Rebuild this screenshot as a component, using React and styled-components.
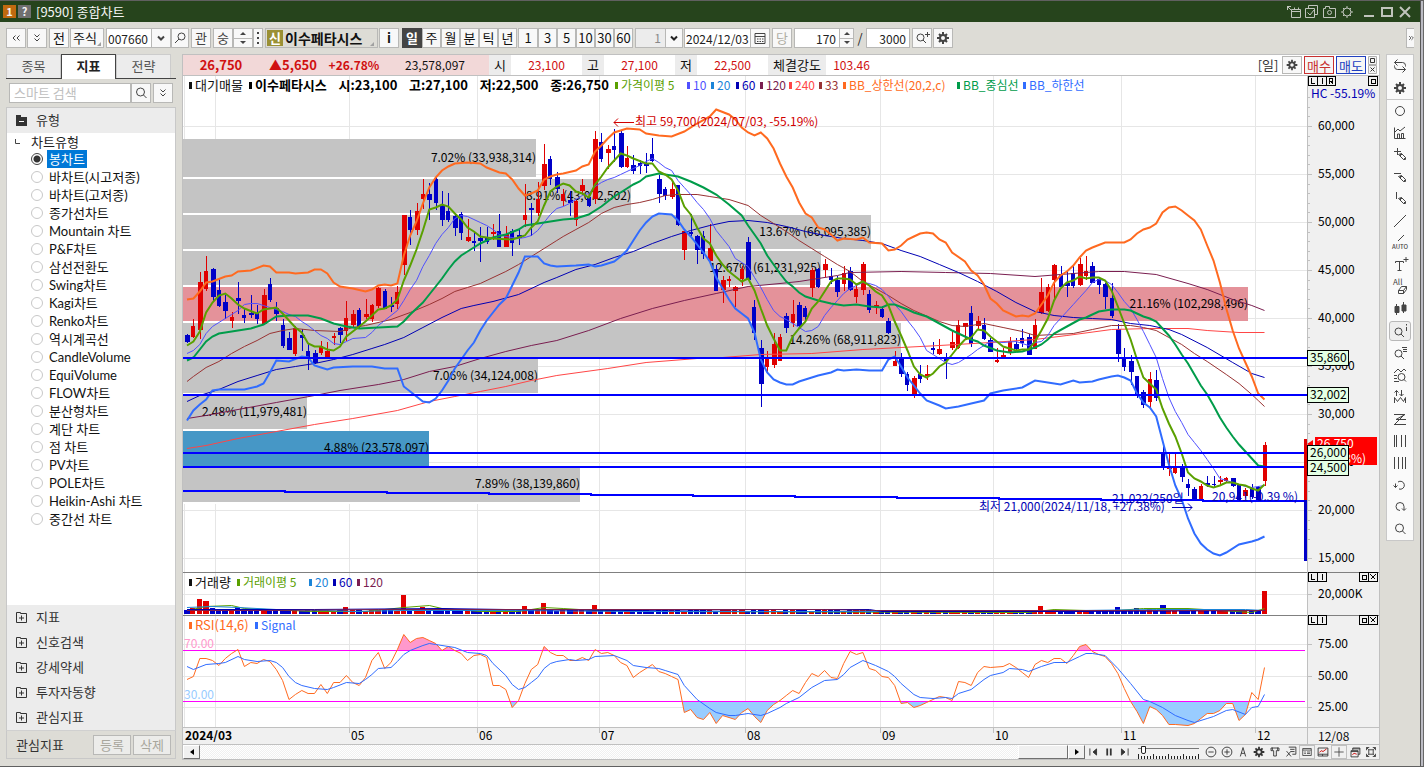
import React, { useLayoutEffect, useRef, useState } from "react";
import styled, { createGlobalStyle, css } from "styled-components";

const FONT = '"Noto Sans CJK KR", "Noto Sans", sans-serif';

const Global = createGlobalStyle`
  * { box-sizing: border-box; }
  body { margin: 0; background: #dddcd6; font-family: ${FONT}; font-size: 13px; line-height: 16px; color: #222; }
  button, input, select { font: inherit; color: inherit; margin: 0; padding: 0; border-radius: 0; }
  svg { display: block; }
`;

/* ---------- chart data ---------- */

// high, body top, body bottom, low, direction
const CANDLES = `334 335 342 343 b|319 326 337 338 r|272 282 330 339 r|256 271 289 291 r|268 269 297 302 b|279 290 306 307 b|295 302 311 319 b|312 317 321 328 r|282 298 301 314 b|309 315 318 323 b|295 313 315 318 b|305 313 319 324 b|289 295 324 325 r|278 284 300 302 b|302 308 314 321 b|319 325 346 348 b|332 338 350 350 b|326 328 354 356 r|329 335 338 351 b|344 351 358 370 b|350 353 363 364 b|341 346 353 355 r|342 351 357 358 r|333 336 338 345 r|327 328 335 343 b|301 318 331 341 r|310 314 325 327 r|308 310 327 328 b|299 314 317 319 r|304 305 319 322 r|287 288 306 308 r|289 291 309 309 b|297 305 307 312 b|286 292 304 309 r|215 215 265 275 r|210 217 230 245 b|203 211 230 235 r|179 194 199 209 r|183 194 200 220 b|177 179 203 210 b|191 206 220 226 b|193 211 220 222 b|215 216 228 236 b|212 214 233 240 b|219 237 241 242 r|233 241 243 251 b|227 238 241 262 b|227 238 242 244 b|224 232 234 240 r|214 231 247 247 b|226 234 247 247 r|229 231 243 256 b|230 235 238 245 b|184 215 220 227 r|203 208 210 236 b|182 199 213 216 r|144 164 186 190 r|156 159 179 185 b|172 177 189 193 b|189 194 201 206 r|191 200 203 216 b|200 201 220 226 r|179 185 191 195 r|194 197 206 207 b|131 139 199 204 r|133 142 159 162 b|145 149 153 169 r|129 146 150 162 b|130 133 167 168 b|146 158 167 168 r|155 165 171 174 b|160 163 166 174 b|153 164 166 173 b|138 154 161 162 b|175 179 194 203 b|187 189 196 200 b|180 189 197 199 r|185 185 225 226 b|230 231 250 260 r|214 232 234 236 b|235 236 250 264 b|231 236 254 259 b|224 248 261 262 r|265 269 291 291 b|276 280 290 303 r|276 279 281 287 r|286 287 291 307 r|266 269 279 286 r|237 242 280 280 b|300 307 333 340 b|340 348 384 407 b|351 358 367 374 r|333 344 365 368 r|334 337 361 361 r|313 316 328 333 b|300 314 323 327 r|302 305 326 328 b|306 308 317 320 b|268 270 288 297 r|268 269 287 288 b|259 264 270 277 r|268 276 280 284 b|276 280 292 297 b|266 273 284 291 r|267 271 290 291 b|285 289 297 303 r|262 264 290 295 r|290 294 310 313 b|301 305 307 314 r|306 309 317 318 b|318 321 333 334 b|351 361 366 366 r|353 358 374 377 b|372 374 385 391 b|376 378 394 398 r|365 374 379 383 b|365 374 376 380 r|342 348 350 354 b|339 349 354 355 r|353 359 361 379 b|330 342 348 350 r|320 325 348 349 r|323 323 327 340 r|306 313 344 347 b|316 321 326 329 r|318 325 339 340 b|338 340 352 352 b|348 360 362 363 r|348 355 358 358 r|337 341 353 355 r|338 344 349 351 b|329 338 343 347 b|334 337 355 355 b|319 325 349 349 r|278 292 313 314 r|284 287 311 312 r|264 265 280 299 r|266 275 287 288 b|271 283 286 297 b|266 273 286 288 b|258 264 285 286 r|256 271 276 280 r|262 266 283 283 b|277 279 285 294 b|283 284 297 309 b|283 298 316 318 b|324 329 354 362 b|348 357 367 371 b|355 361 372 385 b|376 376 396 398 b|390 392 405 408 b|372 379 402 408 r|370 380 398 401 b|446 453 467 470 b|453 467 469 476 r|454 468 473 474 r|464 468 477 482 b|479 484 488 496 b|487 489 500 501 b|484 486 499 500 r|476 483 485 487 b|476 484 485 488 b|476 480 482 486 r|477 478 481 483 r|478 478 486 487 b|485 485 500 500 b|488 490 496 498 r|484 488 497 499 b|486 487 500 501 b|442 445 481 486 r`
  .split("|")
  .map((row) => {
    const [high, top, bottom, low, dir] = row.split(" ");
    return { high: +high, top: +top, bottom: +bottom, low: +low, up: dir === "r" };
  });

const series = (text) => text.trim().split(/\s+/).map((p) => p.split(":").map(Number));

const UPPER = series(`0:299 1:298 2:291 3:282 4:281 6:276 7:275 8:271 10:270 12:265 13:266 14:272 16:272 17:273 19:272 20:269 21:269 22:273 23:282 24:286 26:288 28:291 29:289 30:285 31:284 32:285 33:283 34:255 35:235 36:221 37:203 38:187 39:177 40:170 41:166 42:163 44:162 46:163 47:167 49:172 50:173 51:179 52:188 53:195 54:193 55:190 56:179 57:176 58:174 59:173 61:170 62:166 63:164 64:151 65:145 66:138 67:132 68:130 69:128 71:129 72:133 74:135 76:136 78:131 80:123 82:116 83:109 85:114 86:119 87:127 88:132 89:135 90:132 91:138 92:148 93:163 94:176 95:187 96:202 97:213 98:217 99:227 100:229 101:234 102:240 103:238 105:239 106:237 107:242 109:243 110:250 111:249 112:245 113:239 114:236 115:233 116:232 117:233 118:239 119:242 120:252 122:261 123:270 124:275 125:284 126:298 127:303 128:310 130:316 131:315 132:316 133:313 134:304 135:295 136:282 137:275 138:271 139:265 140:257 141:250 142:247 144:242 147:242 148:239 149:233 150:229 151:227 152:223 153:212 154:207 155:206 156:210 157:215 158:220 159:229 160:245 161:260 162:282 163:308 164:330 165:348 166:362 167:376 168:393 169:399`);
const MA5 = series(`0:345 1:341 2:331 3:312 4:302 5:295 6:293 7:298 8:304 9:308 11:313 12:309 14:307 15:313 16:320 17:327 18:332 19:343 20:346 21:346 22:349 23:350 24:346 25:336 26:331 27:326 28:321 29:315 30:309 31:308 32:305 33:299 34:280 35:265 36:249 37:230 38:209 39:207 40:204 41:206 42:213 43:219 44:227 45:231 46:236 48:238 51:239 52:237 53:235 54:227 55:221 56:205 57:191 58:186 59:183 60:185 61:191 62:193 63:197 64:184 65:176 66:167 67:160 68:153 69:155 70:158 72:163 73:163 74:171 75:174 76:179 77:190 78:206 79:214 80:227 81:238 82:243 83:255 84:264 85:271 86:276 87:281 88:278 89:290 90:308 91:325 92:338 93:350 94:350 95:336 96:328 97:321 98:308 99:301 100:291 101:281 102:278 103:278 104:279 105:284 106:281 107:285 108:291 109:295 110:305 111:321 112:335 113:350 114:366 115:374 116:377 117:373 118:366 119:362 120:354 121:346 122:339 123:337 124:329 125:330 126:336 127:341 128:346 129:348 130:350 131:349 132:349 133:341 134:330 135:318 136:300 137:288 138:282 139:280 140:276 141:278 142:277 143:277 144:280 145:290 146:306 147:323 148:339 149:359 150:377 151:383 152:389 153:408 154:423 155:436 156:453 157:472 158:478 159:481 160:485 161:487 162:485 163:482 164:482 165:484 166:485 167:488 168:490 169:484`);
const MA10 = series(`0:353 1:350 2:344 3:333 4:326 5:322 6:318 7:314 8:310 9:304 10:303 11:303 12:305 13:307 14:309 15:311 16:314 17:316 18:321 19:325 20:330 21:335 22:338 23:343 24:344 25:341 26:338 28:337 29:332 30:325 31:320 32:315 33:310 34:300 35:289 36:280 37:266 38:255 39:243 40:234 41:227 42:218 43:215 44:216 45:219 46:222 47:225 48:229 49:234 50:236 51:237 52:238 53:237 54:235 55:230 56:222 57:214 58:208 59:206 60:203 61:199 62:195 63:193 64:186 65:182 66:179 67:177 68:174 69:171 70:168 71:165 72:161 73:158 74:162 75:167 76:170 77:180 78:187 79:194 80:202 81:209 82:218 83:230 84:238 85:246 86:258 87:262 88:266 89:277 90:287 91:299 92:310 93:316 94:319 95:323 96:327 97:331 98:330 99:326 100:315 101:307 102:300 103:293 104:288 105:285 106:282 107:283 108:285 109:289 110:296 111:304 112:311 113:320 114:328 115:337 116:350 117:354 118:358 119:362 120:364 121:362 122:358 123:354 124:349 125:345 126:341 128:342 130:341 132:345 133:342 134:341 135:335 136:325 137:318 138:311 139:304 140:297 141:290 142:282 143:279 144:280 145:284 146:292 147:301 148:308 149:319 150:331 151:344 152:357 153:378 154:397 155:411 156:422 157:434 158:442 159:450 160:459 161:468 162:478 163:480 164:482 165:484 166:486 167:487 168:486 169:485`);
const MIDDLE = series(`0:360 1:357 2:349 3:341 4:336 5:333 6:332 8:330 10:328 12:324 14:316 16:315 19:315 21:318 23:323 25:326 27:328 33:326 34:321 35:314 36:308 37:302 38:294 39:286 40:278 41:269 42:261 43:255 44:251 45:247 46:243 47:240 48:237 50:234 52:229 53:225 54:224 56:222 57:221 59:219 61:218 63:214 65:206 67:196 69:188 70:184 71:181 72:176 74:173 75:174 77:176 79:181 81:187 83:194 85:204 87:215 88:225 89:234 90:243 91:255 92:264 93:273 94:281 95:286 96:292 97:296 99:300 101:303 103:305 105:304 107:306 109:307 110:304 111:304 113:309 114:312 116:316 118:323 120:330 121:333 123:339 124:341 125:345 127:350 129:352 131:351 133:347 134:344 135:339 136:333 138:326 140:319 141:317 142:314 143:311 145:309 147:309 148:310 149:313 150:316 151:318 152:321 153:328 154:335 155:344 156:354 157:363 158:374 159:385 160:394 161:405 162:417 163:427 164:436 165:444 166:451 167:458 168:465 169:466`);
const LOWER = series(`0:420 1:410 2:404 3:399 4:390 5:389 9:389 11:386 12:383 13:372 14:360 16:361 18:356 19:357 20:365 21:367 22:369 23:367 26:366 29:366 31:368 33:368 34:386 35:391 36:396 37:401 38:402 39:398 40:390 41:380 42:368 43:359 44:350 45:342 46:330 47:320 48:312 49:304 50:298 51:285 52:272 53:256 55:256 56:263 57:265 58:266 61:265 63:264 64:266 65:265 67:261 68:256 69:250 70:240 71:230 72:222 73:216 74:213 76:214 77:220 78:229 79:236 80:244 81:252 82:261 83:277 84:288 85:299 86:308 87:313 88:318 89:332 90:359 91:372 92:379 93:382 94:384 95:384 96:381 98:377 99:375 101:372 102:369 103:370 105:369 107:370 109:370 110:359 111:356 112:366 113:377 114:385 115:393 116:400 118:405 119:408 121:406 123:403 125:400 126:393 128:390 131:387 133:380 134:381 137:384 139:380 140:382 142:381 143:379 145:376 146:375 147:377 148:380 149:393 150:402 151:407 152:416 153:440 154:464 155:485 156:499 157:518 158:533 159:543 160:549 161:553 162:555 163:552 165:544 167:541 168:539 169:536`);
const MA33 = series(`0:381 1:376 3:367 5:361 7:353 9:346 11:340 13:333 15:330 17:328 20:330 24:331 26:327 28:325 32:319 35:312 38:304 40:298 42:291 44:287 46:283 48:277 50:271 52:264 54:256 56:248 58:240 59:236 61:229 63:222 65:213 67:207 69:204 71:202 73:199 75:195 77:194 80:194 82:196 85:199 88:205 90:215 92:223 94:231 96:240 98:248 100:256 102:264 104:271 106:281 108:288 110:295 112:303 114:310 118:321 120:325 122:326 125:323 128:327 131:331 133:335 136:334 139:333 142:329 145:325 148:325 150:327 152:330 154:337 156:344 158:353 160:361 163:374 165:383 167:394 168:400 169:406`);
const MA60 = series(`0:401 2:395 5:389 8:381 11:375 14:369 17:366 20:363 23:359 26:354 29:348 31:344 34:337 37:327 40:317 43:308 45:305 48:301 52:294 56:282 58:277 61:269 64:264 67:257 70:251 73:243 76:236 79:230 82:225 85:221 88:220 91:222 94:226 97:231 100:235 103:238 106:240 109:243 112:250 115:256 118:264 121:272 124:281 127:291 130:302 133:311 136:315 139:317 142:318 145:319 148:323 151:325 154:329 156:334 160:347 164:362 167:373 169:377`);
const MA120 = series(`0:418 3:415 8:409 14:402 20:395 24:390 30:384 34:379 38:371 42:366 46:358 50:351 54:345 58:340 63:330 68:318 73:308 78:300 83:293 88:286 93:283 96:281 99:278 102:275 104:272 112:271 119:272 126:273 133:276 139:273 143:271 147:271 152:274 157:283 160:289 164:299 167:305 169:310`);
const MA240 = series(`0:448 3:445 8:438 14:431 20:424 26:418 33:410 38:401 42:396 46:391 50:386 54:380 58:375 66:368 72:362 80:358 84:357 90:354 98:353 106:349 112:347 118:345 126:342 133:339 138:335 145:329 151:328 157:328 160:330 165:332 169:332`);
const RSI = series(`0:679 1:676 2:658 3:658 4:660 5:665 6:658 7:653 8:649 9:666 10:662 11:663 12:659 13:661 14:669 15:680 16:699 17:694 18:690 19:693 20:693 21:684 22:693 23:682 24:682 25:675 26:682 27:685 28:677 29:660 30:652 31:668 32:662 33:649 34:634 35:642 36:638 37:637 38:640 39:643 40:650 41:646 42:650 43:653 44:660 45:655 46:654 47:657 48:685 49:685 50:689 51:707 52:700 53:683 54:669 55:664 56:646 57:652 58:655 59:655 60:660 61:660 62:657 63:660 64:649 65:653 66:652 67:655 68:662 69:665 70:677 71:672 72:668 73:664 74:671 75:673 76:676 77:679 78:712 79:709 80:717 81:719 82:712 83:723 84:715 85:717 86:719 87:712 88:708 89:716 90:722 91:710 92:704 93:700 94:695 95:690 96:693 97:682 98:673 99:676 100:670 101:677 102:678 103:663 104:651 105:654 106:652 107:668 108:670 109:676 110:677 111:685 112:703 113:702 114:707 115:705 116:702 117:699 118:696 119:697 120:700 121:681 122:682 123:685 124:672 125:666 126:667 128:666 129:663 130:667 131:672 132:677 133:664 134:660 135:662 136:658 137:658 138:663 139:655 140:646 141:644 142:651 143:654 144:656 145:663 146:673 147:688 148:701 149:711 150:723 151:706 152:709 153:715 154:724 155:724 157:725 158:723 159:718 160:713 161:713 162:710 163:703 164:703 165:720 166:714 167:692 168:699 169:667`);
const SIGNAL = series(`0:666 1:669 3:664 5:663 6:662 8:656 9:659 11:661 13:660 14:662 15:667 16:676 17:682 18:685 20:688 22:689 23:687 25:682 27:683 28:679 29:674 30:668 32:667 33:661 34:654 35:650 37:645 38:643 39:644 40:645 42:647 44:652 46:653 47:655 48:663 50:675 51:684 52:689 53:687 54:682 55:677 56:668 57:663 58:661 60:659 61:660 63:659 64:656 67:655 69:660 70:665 72:667 74:668 75:670 77:674 78:685 80:699 82:708 83:712 85:715 86:715 88:713 90:715 91:713 93:707 94:703 95:700 96:697 98:687 100:680 102:679 103:674 104:667 106:660 108:665 110:671 111:676 112:683 114:694 115:697 117:698 119:697 120:698 121:693 123:689 125:679 126:675 128:672 129:668 131:669 132:671 134:666 136:662 138:662 140:656 141:653 142:653 144:655 146:668 148:683 150:699 151:701 153:707 155:715 157:720 158:722 160:718 161:716 163:710 164:709 166:714 167:707 168:706 169:694`);

const VOLUME_TOPS = { 1: 608, 2: 599, 3: 601, 4: 608, 5: 609, 8: 607, 25: 607, 34: 595, 37: 607, 53: 606, 56: 603, 64: 605, 134: 606, 146: 607, 149: 608, 151: 608, 153: 605, 169: 591 };
const VOLUME_LINES = [
  ["#5aa000", series("0:610 3:606 7:605 9:608 16:610 20:611 28:611 34:607 38:605 40:608 46:611 52:611 56:607 59:608 64:610 74:611 128:612 132:612 136:609 141:610 146:610 150:608 157:608 162:610 167:612 169:608")],
  ["#1c84d8", series("0:607 4:606 8:607 14:609 22:610 26:611 34:610 50:610 70:611 110:611 140:610 152:609 166:609 169:610")],
  ["#0000b4", series("0:609 20:609 40:608 50:609 70:610 90:609 107:609 109:611 140:611 169:610")],
  ["#7a1e50", series("0:610 12:610 30:609 100:609 108:610 169:610")],
];

const PROFILE = [
  [139, 177, 536, "7.02% (33,938,314)", "#c4c4c4"],
  [179, 213, 631, "8.91% (43,072,502)", "#c4c4c4"],
  [215, 249, 871, "13.67% (66,095,385)", "#c4c4c4"],
  [251, 285, 821, "12.67% (61,231,925)", "#c4c4c4"],
  [287, 321, 1248, "21.16% (102,298,496)", "#e4929a"],
  [323, 357, 901, "14.26% (68,911,823)", "#c4c4c4"],
  [359, 393, 538, "7.06% (34,124,008)", "#c4c4c4"],
  [395, 429, 307, "2.48% (11,979,481)", "#c4c4c4"],
  [431, 466, 429, "4.88% (23,578,097)", "#4697c6"],
  [467, 502, 580, "7.89% (38,139,860)", "#c4c4c4"],
];

const MONTHS = [[215, ""], [349, "05"], [477, "06"], [599, "07"], [745, "08"], [880, "09"], [993, "10"], [1121, "11"], [1255, "12"]];
const PRICE_LEVELS = [358, 395, 453, 467];

/* ---------- chart scaling ---------- */

const LEFT = 183;
const SPAN = 1124;
const PRICE = { top: 76, height: 496 };
const VOLUME = { top: 572, height: 43 };
const STRENGTH = { top: 615, height: 112 };
const DATES = { top: 727, height: 17 };

function usePane(pane, baseWidth) {
  const ref = useRef(null);
  const [size, setSize] = useState([baseWidth, pane.height]);
  useLayoutEffect(() => {
    const measure = () => {
      const box = ref.current.getBoundingClientRect();
      setSize([box.width, box.height]);
    };
    measure();
    const observer = new ResizeObserver(measure);
    observer.observe(ref.current);
    return () => observer.disconnect();
  }, []);
  const [w, h] = size;
  const X = (x) => ((x - LEFT) * w) / SPAN;
  const Y = (y) => ((y - pane.top) * h) / pane.height;
  const bar = (i) => X(187 + i * 6.376);
  const line = (points) => points.map(([i, y]) => `${bar(i).toFixed(1)},${(Y(y) + 0.5).toFixed(1)}`).join(" ");
  return { ref, w, h, X, Y, bar, line };
}

const PaneSvg = styled.svg`
  width: 100%;
  height: 100%;
  min-width: 0;
  min-height: 0;
  overflow: hidden;
  background: ${(p) => p.$fill || "#fff"};
  font-size: 12px;
`;

const Line = styled.polyline`
  fill: none;
  stroke: ${(p) => p.$color};
  stroke-width: ${(p) => (p.$bold ? 2 : 1)}px;
`;

const GridLine = styled.line`
  stroke: #e6e6e6;
  stroke-width: 1px;
  shape-rendering: crispEdges;
`;

const Grid = ({ p, rows }) => (
  <>
    {rows.map((y) => <GridLine key={y} x1="0" x2={p.w} y1={Math.round(p.Y(y)) + 0.5} y2={Math.round(p.Y(y)) + 0.5} />)}
    <GridLine x1="1.5" x2="1.5" y1="0" y2={p.h} />
    {MONTHS.map(([x]) => <GridLine key={x} x1={Math.round(p.X(x)) + 0.5} x2={Math.round(p.X(x)) + 0.5} y1="0" y2={p.h} />)}
  </>
);

function PriceChart() {
  const p = usePane(PRICE, SPAN);
  const { X, Y, bar, line, w } = p;
  return (
    <PaneSvg ref={p.ref} role="img" aria-label="이수페타시스 일봉 차트">
      <Grid p={p} rows={[126, 174, 222, 270, 318, 366, 414, 462, 510, 558]} />
      {PROFILE.map(([y1, y2, x, label, fill]) => (
        <g key={label}>
          <rect x="0" y={Y(y1)} width={X(x)} height={Y(y2) - Y(y1)} fill={fill} />
          <rect x="0" y={Y(y2)} width={X(x)} height="2" fill="#fff" />
          <text x={X(x)} y={Math.floor(Y((y1 + y2) / 2)) + 4} textAnchor="end" fill="#000">{label}</text>
        </g>
      ))}
      {CANDLES.map((c, i) => {
        const x = Math.round(bar(i));
        const color = c.up ? "#e00000" : "#0000c8";
        return (
          <g key={i} fill={color} shapeRendering="crispEdges">
            <rect x={x} y={Y(c.high)} width="1" height={Math.max(1, Y(c.low) - Y(c.high))} />
            <rect x={x - 2} y={Y(c.top)} width={i % 2 ? 4 : 5} height={Math.max(1, Y(c.bottom) - Y(c.top))} />
          </g>
        );
      })}
      <Line $color="#ff4646" points={line(MA240)} />
      <Line $color="#7a1e50" points={line(MA120)} />
      <Line $color="#0000b4" points={line(MA60)} />
      <Line $color="#993333" points={line(MA33)} />
      <Line $color="#5050ff" points={line(MA10)} />
      <Line $color="#009c4a" $bold points={line(MIDDLE)} />
      <Line $color="#5aa000" $bold points={line(MA5)} />
      <Line $color="#ff6a20" $bold points={line(UPPER)} />
      <Line $color="#306cff" $bold points={line(LOWER)} />
      {PRICE_LEVELS.map((y) => <rect key={y} x="0" y={Math.round(Y(y)) - 1} width={w} height="2" fill="#0000ff" />)}
      <Line $color="#0000ff" $bold points={Array.from({ length: 11 }, (_, i) => `${X(183 + i * 102)},${Math.round(Y(491 + i))} ${X(285 + i * 102)},${Math.round(Y(491 + i))}`).join(" ")} />
      <rect x={w - 3} y={Y(439)} width="3" height={Y(500) - Y(439)} fill="#e00000" />
      <rect x={w - 3} y={Y(500)} width="3" height={Y(561) - Y(500)} fill="#0000c8" />
      <g fill="none" stroke="#d00000"><path d={`M${X(614)} ${Y(122) + 0.5}h20m-16-4l-4 4l4 4`} /></g>
      <text x={X(635)} y={Y(126)} fill="#d00000">최고 59,700(2024/07/03, -55.19%)</text>
      <g fill="none" stroke="#0000b4"><path d={`M${X(1172)} ${Y(507) + 0.5}h20m-4-4l4 4l-4 4`} /></g>
      <g fill="#0000b4">
        <text x={X(979)} y={Y(511)}>최저 21,000(2024/11/18, +27.38%)</text>
        <text x={X(1112)} y={Y(503)}>21,022(250일</text>
        <text x={X(1212)} y={Y(501)}>20,941(-0.39 %)</text>
      </g>
    </PaneSvg>
  );
}

function VolumeChart() {
  const p = usePane(VOLUME, SPAN);
  return (
    <PaneSvg ref={p.ref} role="img" aria-label="거래량">
      <Grid p={p} rows={[594]} />
      {CANDLES.map((c, i) => {
        const top = VOLUME_TOPS[i] || 610 + (i % 5 === 3 ? 1 : 0);
        return <rect key={i} x={Math.round(p.bar(i)) - 3} y={p.Y(top)} width={i % 3 ? 5 : 6} height={p.Y(614) - p.Y(top)} fill={c.up ? "#e00000" : "#0000c8"} shapeRendering="crispEdges" />;
      })}
      {VOLUME_LINES.map(([color, points]) => <Line key={color} $color={color} points={p.line(points)} />)}
      <rect width={p.w} height="1" fill="#808080" />
    </PaneSvg>
  );
}

function RsiChart() {
  const p = usePane(STRENGTH, SPAN);
  const high = Math.round(p.Y(650)) + 0.5;
  const low = Math.round(p.Y(701)) + 0.5;
  const closed = (y) => `${p.bar(0)},${y} ${p.line(RSI)} ${p.bar(169)},${y}`;
  return (
    <PaneSvg ref={p.ref} role="img" aria-label="RSI">
      <clipPath id="over"><rect width={p.w} height={high} /></clipPath>
      <clipPath id="under"><rect y={low} width={p.w} height={p.h} /></clipPath>
      <Grid p={p} rows={[644, 676, 707]} />
      <polygon points={closed(high)} fill="#ff99cc" clipPath="url(#over)" />
      <polygon points={closed(low)} fill="#99ccff" clipPath="url(#under)" />
      <text x="1" y={high - 3} fill="#ff99cc">70.00</text>
      <text x="1" y={low - 3} fill="#99ccff">30.00</text>
      <rect y={high - 0.5} width={p.w - 2} height="1" fill="#ff00ff" />
      <rect y={low - 0.5} width={p.w - 2} height="1" fill="#ff00ff" />
      <Line $color="#ff6a20" points={p.line(RSI)} />
      <Line $color="#306cff" points={p.line(SIGNAL)} />
      <rect width={p.w} height="1" fill="#808080" />
    </PaneSvg>
  );
}

function DateAxis() {
  const p = usePane(DATES, SPAN);
  return (
    <PaneSvg ref={p.ref} $fill="#f0f0f0">
      <rect width={p.w} height="1" fill="#c0c0c0" />
      <text x="2" y="13" fontWeight="700" fill="#000">2024/03</text>
      {MONTHS.filter(([, label]) => label).map(([x, label]) => (
        <g key={x}>
          <rect x={Math.round(p.X(x))} y="1" width="1" height="5" fill="#c0c0c0" />
          <text x={p.X(x) + 2} y="13" fill="#000">{label}</text>
        </g>
      ))}
    </PaneSvg>
  );
}

/* ---------- right price scale ---------- */

const PaneBox = ({ x, y, d }) => (
  <g fill="none" stroke="#000" shapeRendering="crispEdges" transform={`translate(${x} ${y})`}>
    <rect x="0.5" y="0.5" width="9" height="9" />
    <path d={d} />
  </g>
);
const GLYPH = { L: "M3.5 2v5h3", I: "M5.5 2v6", R: "M3.5 8V2.5h3v2.500h-3M5.500 5v1l1.500 2", box: "M3 3.5h4v4h-4z", x: "M2.500 2.500l5 5m0-5l-5 5" };

function PriceAxis() {
  const p = usePane(PRICE, 72);
  const labels = ["60,000", "55,000", "50,000", "45,000", "40,000", "35,000", "30,000", "25,000", "20,000", "15,000"];
  const minor = Array.from({ length: 47 }, (_, i) => 97 + i * 9.6);
  return (
    <PaneSvg ref={p.ref} $fill="#f0f0f0">
      <rect width="1" height={p.h} fill="#c0c0c0" />
      <g fill="#c0c0c0">{minor.map((y) => <rect key={y} y={Math.round(p.Y(y + 0.2))} width="3" height="1" />)}</g>
      {labels.map((t, i) => (
        <g key={t}>
          <rect y={Math.round(p.Y(126 + i * 48))} width="5" height="1" fill="#c0c0c0" />
          <text x="11" y={p.Y(130 + i * 48)} fill="#000">{t}</text>
        </g>
      ))}
      <text x="4" y="22" fill="#0000b4">HC -55.19%</text>
      <PaneBox x={1} y={0} d={GLYPH.L} /><PaneBox x={10} y={0} d={GLYPH.I} /><PaneBox x={19} y={0} d={GLYPH.R} />
      <PaneBox x={61} y={0} d={GLYPH.box} />
      <g transform={`translate(0 ${p.Y(437)})`}>
        <rect x="8" width="62" height="28" fill="#ff0000" />
        <path d="M0 7l6-4v8z" fill="#ff0000" />
        <text x="10" y="11" fill="#fff">26,750</text>
        <text x="10" y="26" fill="#fff">(26.78%)</text>
      </g>
      {[["35,860", 350], ["32,002", 387], ["26,000", 445], ["24,500", 460]].map(([t, y]) => (
        <g key={t} transform={`translate(0 ${Math.round(p.Y(y))})`}>
          <rect x="0.5" y="0.5" width="41" height="15" fill="#e4ffe4" stroke="#000" />
          <text x="3" y="12" fill="#000">{t}</text>
        </g>
      ))}
    </PaneSvg>
  );
}

function SubAxis({ pane, labels }) {
  const p = usePane(pane, 72);
  return (
    <PaneSvg ref={p.ref} $fill="#f0f0f0">
      <rect width="72" height="1" fill="#808080" />
      <rect width="1" height={p.h} fill="#c0c0c0" />
      {labels.map(([t, y]) => (
        <g key={t}>
          <rect y={Math.round(p.Y(y))} width="5" height="1" fill="#c0c0c0" />
          <text x="11" y={p.Y(y) + 4} fill="#000">{t}</text>
        </g>
      ))}
      <PaneBox x={1} y={0} d={GLYPH.L} /><PaneBox x={10} y={0} d={GLYPH.I} />
      <PaneBox x={52} y={0} d={GLYPH.box} /><PaneBox x={61} y={0} d={GLYPH.x} />
    </PaneSvg>
  );
}

/* ---------- icons ---------- */

const Drawing = styled.svg`
  width: ${(p) => p.$size || 18}px;
  height: ${(p) => p.$size || 18}px;
  flex: none;
  fill: none;
  stroke: currentColor;
  stroke-width: 1px;
  overflow: visible;
`;

const Gear = () => (
  <>
    <circle cx="9" cy="9" r="3" strokeWidth="2" />
    <path strokeWidth="2" d="M9 3v3M9 12v3M3 9h3M12 9h3M5 5l2 2M11 11l2 2M13 5l-2 2M7 11l-2 2" />
  </>
);
const Pencil = () => <path d="M7.500 8.500l3-1l4 4v2h-2l-4-4zM10.500 7.500l-2 2M14.500 11.500l-2 2M9 10l2-2" />;
const SmallLens = () => <><circle cx="7.500" cy="9.500" r="3.500" /><path d="M10 12l3 3" /></>;

const ICONS = {
  gear: <Gear />,
  loop: <path d="M6.500 2.500l-3 3l3 3M3.500 5.500h8a3 3 0 0 1 3 3v1M11.500 15.500l3-3l-3-3M14.500 12.500h-8a3 3 0 0 1-3-3v-1" />,
  circle: <circle cx="9" cy="9" r="4.500" />,
  bars: <path d="M3.500 3.500v11h11M4 8l3-3l2 2l5-4M6.500 14v-4h2v4M10.500 14V9.500h2V14" />,
  plusPen: <><path d="M3 5.500h7M6.500 2v7" /><Pencil /></>,
  minusPen: <><path d="M3 5.500h7" /><Pencil /></>,
  barPen: <><path d="M5.500 2v7" /><Pencil /></>,
  slash: <path d="M3 15L15 3" />,
  auto: <><path d="M7 7l6-6" /><text x="1" y="15" fontSize="6" fontWeight="500" fill="currentColor" stroke="none">AUTO</text></>,
  text: <path d="M4.500 7V5.500h8V7M8.500 5.500v9M6.500 14.500h4M12.500 3.500h5M15 1v5" />,
  all: <><text x="2" y="7" fontSize="8" fill="currentColor" stroke="none">All</text><path d="M7.500 12.500l3-4h5v3l-3 4h-5zM7.500 12.500h5v3M12.500 12.500l3-4" /></>,
  candles: <path fill="currentColor" d="M5.500 4v11M12.500 2v11M4 6.500h4v6h-4zM11 5h4v6h-4z" />,
  lensInfo: <><SmallLens /><path d="M15.500 5v4M15.500 2v1.500" /></>,
  lensLines: <><SmallLens /><path d="M11 3.500h5M12 5.500h4M12 7.500h4" /></>,
  linesLens: <><path d="M3 7l4-4l3 3l3-3l2 2M3 9.500h3M3 12.500h3M3 15.500h5" /><circle cx="10.500" cy="11" r="3.500" /><path d="M13 13.500l2 2" /></>,
  arrows: <path d="M5.500 8V2.500M3.500 4.500l2-2l2 2M10.500 2v6M8.500 6l2 2l2-2M3.500 15V9.500l3 4l3-4l3 4l2-4V15" />,
  zigzag: <path d="M3 4.500h11l-9 5h10M3 14.500h12M14 4L4 14" />,
  fourA: <path d="M3.500 3v12M5.500 3v12M10.500 3v12M14.500 3v12" />,
  fourB: <path d="M3.500 3v12M7.500 3v12M11.500 3v12M14.500 3v12" />,
  undo: <path d="M7 6a4 4 0 1 1 1 7M4.500 7.500v4M2.500 9.500l2 2l2-2" />,
  redo: <path d="M9 12.500a4 4 0 1 1 4-4v3.500M11 10.500l2 2l2-2" />,
  lens: <><circle cx="8.500" cy="8" r="4" /><path d="M11.500 11l3 3" /></>,
  lensLeft: <><circle cx="10.500" cy="7.500" r="3.500" /><path d="M8 10l-4 4" /></>,
  lensPlus: <><circle cx="7.500" cy="8.500" r="3.500" /><path d="M10 11l3 3M12 5.500h5M14.500 3v5" /></>,
  chevron: <path strokeWidth="2" d="M6 7.500l3 3l3-3" />,
  doubleDown: <path d="M6.500 5.500l2.500 2.500l2.500-2.500M6.500 9.500l2.500 2.500l2.500-2.500" />,
  doubleLeft: <path d="M8.500 6.500l-2.500 2.500l2.500 2.500M12.500 6.500l-2.500 2.500l2.500 2.500" />,
  doubleRight: <path d="M6.500 6.500l2.500 2.500l-2.500 2.500M9.500 6.500l2.500 2.500l-2.500 2.500" />,
  calendar: <path d="M4 4.500h10v10H4zM4 7.500h10M6 10h1.500M8.500 10h1.500M11 10h1.500M6 12.500h1.500M8.500 12.500h1.500M11 12.500h1.500" />,
  popOut: <path d="M7.500 6.500h9v8h-9zM7.500 8.500h9M10.500 4.500v2M14.500 4.500v2M3 3.500h4M3.500 3v4M4 4l3 3" />,
  checkWins: <path d="M3.500 5.500h9v9h-9zM6.500 5V2.500h9v9h-3M5.500 9.500l2.500 2.500l4-5" />,
  camera: <><path d="M3.500 5.500v9h12v-9h-6v-2h-4v2z" /><circle cx="9.500" cy="9.500" r="2" /></>,
  gearThin: <><circle cx="9" cy="9" r="4" /><path d="M9 3v2M9 13v2M3 9h2M13 9h2M5 5l1.500 1.500M11.500 11.500l1.500 1.500M13 5l-1.500 1.500M6.500 11.500l-1.500 1.500" /></>,
  minimize: <path strokeWidth="2" d="M4 13h10" />,
  maximize: <path strokeWidth="2" d="M4 5h10v8H4z" />,
  close: <path strokeWidth="2" d="M4 4l10 10M14 4L4 14" />,
  first: <path d="M5.500 5v8M13 5.500v7l-4-3.500z" fill="currentColor" />,
  pause: <path strokeWidth="2" d="M7 5v8M11 5v8" />,
  last: <path d="M12.500 5v8M5 5.500v7l4-3.500z" fill="currentColor" />,
  zoomOut: <><circle cx="9" cy="9" r="5.500" /><path d="M6 9h6" /></>,
  zoomIn: <><circle cx="9" cy="9" r="5.500" /><path d="M6 9h6M9 6v6" /></>,
  letterA: <path d="M6 14L9 4l3 10M7 10.500h4" />,
  brush: <path d="M4.500 4.500h9v3h-3v6h-3v-6h-3zM6 4v3M12 4v3" />,
  sheet: <path d="M6.500 3.500h8v8h-4M8 6h5M9 8.500h4M4 8l5 6M9 8l-5 6" />,
  panel: <path d="M3.500 4.500h11v9h-11zM3.500 6.500h11M5.500 9h2M5.500 11h2M9 9h4M9 11h4" />,
  chartFrame: <><path d="M3.500 4.500h11v9h-11zM3.500 11.500h11M8.500 11.500v2" /><path stroke="#c00" d="M5 9.500l2-2l2 1l4-3" /></>,
  cross: <path d="M9 3v12M3 9h12" />,
  stack: <><path d="M4.500 7.500h8v7h-8zM6.500 7V4.500h8v7h-2M4.500 8.500h8M6.500 5.500h8" /><path stroke="#c00" d="M6 12l2-1.500l3 1" /></>,
  expand: <path d="M6.500 6.500h5v5h-5zM4 7V4h3M11 4h3v3M14 11v3h-3M7 14H4v-3M4 4l2.500 2.500M14 4l-2.500 2.500M14 14l-2.500-2.500M4 14l2.500-2.500" />,
  folder: <path d="M4.500 4.500h4v1h6v9h-10zM7 10h5M9.500 7.500v5" />,
};

const Icon = ({ name, size }) => <Drawing viewBox="0 0 18 18" $size={size} aria-hidden="true">{ICONS[name]}</Drawing>;

/* ---------- window frame ---------- */

const Window = styled.div`
  display: flex;
  flex-direction: column;
  height: 100vh;
  min-height: 700px;
  min-width: 1280px;
  border: solid #606060;
  border-width: 1px 0 1px 0;
  box-shadow: inset -1px 0 #686868, inset -3px 0 #bcbcc4, inset -4px 0 #585858;
  padding-right: 4px;
  background: #dddcd6;
`;

const TitleBar = styled.header`
  display: flex;
  align-items: center;
  flex: none;
  height: 21px;
  padding: 0 6px 0 3px;
  background: #26441c;
  color: #f4f4f4;
`;

const Badge = styled.span`
  width: 13px;
  height: 13px;
  margin-right: 2px;
  background: ${(p) => p.$color};
  font-size: 11px;
  line-height: 13px;
  font-weight: 700;
  text-align: center;
`;

const Title = styled.h1`
  flex: 1;
  margin: 0 0 0 3px;
  font-size: 13px;
  line-height: 20px;
  font-weight: 400;
`;

const TitleButton = styled.button`
  width: 18px;
  height: 18px;
  margin-left: ${(p) => p.$gap || 0}px;
  border: 0;
  background: none;
  color: #c0c4bc;
`;

/* ---------- toolbar ---------- */

const Toolbar = styled.div`
  display: flex;
  flex: none;
  height: 32px;
  padding: 6px 6px 0 6px;
  align-items: flex-start;
`;

const Group = styled.div`
  display: flex;
  margin-right: ${(p) => p.$gap || 0}px;
  position: relative;
`;

const face = css`
  height: 20px;
  border: 1px solid #b8b8b6;
  background: #f8f8f8;
  color: #444;
`;

const ToolButton = styled.button`
  ${face}
  display: flex;
  align-items: center;
  justify-content: center;
  width: ${(p) => p.$w || 20}px;
  white-space: nowrap;
  color: ${(p) => (p.$dim ? "#b0aea4" : p.$strong ? "#111" : "#444")};
  font-weight: ${(p) => (p.$bold ? 700 : 400)};
  & + & { border-left-width: ${(p) => (p.$joined ? 0 : 1)}px; }
  ${(p) => p.$on && css`background: #444; border-color: #444; color: #fff; font-weight: 700;`}
`;

const Field = styled.input`
  ${face}
  width: ${(p) => p.$w}px;
  padding: 0 ${(p) => (p.$align ? 3 : 0)}px 0 1px;
  border-right-width: ${(p) => (p.$open ? 0 : 1)}px;
  background: #fff;
  font-size: 12px;
  text-align: ${(p) => p.$align || "left"};
  color: #222;
`;

const Spinner = styled.div`
  ${face}
  display: flex;
  flex-direction: column;
  width: ${(p) => p.$w}px;
`;

const SpinButton = styled.button`
  flex: 1;
  display: flex;
  align-items: center;
  justify-content: center;
  border: 0;
  background: none;
  & + & { border-top: 1px solid #b8b8b6; }
`;

const Spin = ({ w }) => (
  <Spinner $w={w}>
    <SpinButton aria-label="증가"><svg width="6" height="3"><path d="M0 3l3-3l3 3z" fill="#444" /></svg></SpinButton>
    <SpinButton aria-label="감소"><svg width="6" height="3"><path d="M0 0l3 3l3-3z" fill="#444" /></svg></SpinButton>
  </Spinner>
);

const Stock = styled.button`
  ${face}
  display: flex;
  align-items: center;
  width: 113px;
  padding: 0 1px;
  background: #dddcd6;
  color: #111;
  font-size: 14px;
  font-weight: 700;
`;

const NewMark = styled.span`
  width: 16px;
  height: 16px;
  margin-right: 2px;
  background: #9a9034;
  color: #fff;
  font-size: 13px;
  line-height: 16px;
`;

const Corner = styled.svg`
  width: 4px;
  height: 4px;
  margin: 12px 0 0 ${(p) => p.$gap || 0}px;
`;

const CountSelect = styled.select`
  ${face}
  width: 48px;
  padding-right: 21px;
  appearance: none;
  background: linear-gradient(to right, #ececec 29px, #b8b8b6 29px, #b8b8b6 30px, #f8f8f8 30px);
  color: #888;
  font-size: 12px;
  text-align: right;
  text-align-last: right;
`;

const SelectMark = styled.span`
  position: absolute;
  right: 0;
  top: 1px;
  pointer-events: none;
`;

const Slash = styled.span`
  width: 12px;
  line-height: 19px;
  text-align: center;
`;

const More = styled.button`
  ${face}
  width: 8px;
  margin-left: auto;
  border-right: 0;
  overflow: hidden;
  display: flex;
  align-items: center;
  justify-content: center;
`;

/* ---------- body ---------- */

const Body = styled.main`
  display: grid;
  grid-template-columns: 170px minmax(0, 1fr) 28px;
  gap: 6px;
  flex: 1;
  min-height: 0;
  padding: 0 6px;
  margin-bottom: 6px;
`;

const Sidebar = styled.aside`
  display: flex;
  flex-direction: column;
  min-height: 0;
  margin-bottom: 1px;
  color: #333;
`;

const Tabs = styled.div`
  display: flex;
  flex: none;
  height: 25px;
  border-bottom: 1px solid #444;
`;

const Tab = styled.button`
  width: 55px;
  height: ${(p) => (p.$on ? 25 : 24)}px;
  padding-bottom: 2px;
  border: 1px solid ${(p) => (p.$on ? "#444" : "#ccc")};
  border-bottom: 0;
  background: ${(p) => (p.$on ? "#fff" : "#ececec")};
  color: ${(p) => (p.$on ? "#222" : "#555")};
  font-weight: ${(p) => (p.$on ? 700 : 400)};
`;

const SearchRow = styled.div`
  display: flex;
  flex: none;
  height: 28px;
  padding: 4px 3px 0 3px;
`;

const SearchInput = styled.input`
  ${face}
  flex: 1;
  min-width: 0;
  padding-left: 4px;
  padding-bottom: 2px;
  border-width: 1px;
  background: #fff;
  &::placeholder { color: #c0c0c0; opacity: 1; }
`;

const Tree = styled.div`
  display: flex;
  flex: 1;
  flex-direction: column;
  min-height: 0;
  border: 1px solid #c8c8c8;
  border-bottom: 0;
  background: #fff;
`;

const Section = styled.button`
  display: flex;
  flex: none;
  align-items: center;
  gap: 6px;
  height: 25px;
  padding: 0 0 2px 5px;
  border: 0;
  background: #ececec;
  color: #333;
`;

const Options = styled.fieldset`
  flex: 1;
  min-height: 0;
  margin: 0;
  padding: 0;
  border: 0;
  overflow: hidden;
`;

const OptionsTitle = styled.legend`
  display: flex;
  align-items: center;
  height: 17px;
  margin: 0;
  padding: 0 0 0 8px;
  gap: 10px;
  color: #222;
`;

const Option = styled.label`
  display: flex;
  align-items: center;
  height: 18px;
  padding-left: 24px;
  gap: 4px;
  color: #111;
  font-family: Lato, ${FONT};
`;

const Radio = styled.input`
  appearance: none;
  width: 12px;
  height: 12px;
  border: 1px solid #c8c8c8;
  border-radius: 50%;
  background: #fff;
  &:checked { border-color: #444; background: radial-gradient(circle, #333 0 3px, #fff 4px); }
`;

const OptionText = styled.span`
  padding: 0 2px;
  line-height: 18px;
  white-space: nowrap;
  ${(p) => p.$on && css`background: #0078d7; color: #fff;`}
`;

const SideFooter = styled.div`
  display: flex;
  flex: none;
  align-items: center;
  gap: 2px;
  height: 29px;
  padding: 0 4px 0 9px;
  border: 1px solid #c8c8c8;
  border-top-color: #d0d0d0;
  background: #dddcd6;
`;

const FooterLabel = styled.span`
  flex: 1;
  color: #333;
`;

const FooterButton = styled.button`
  width: 38px;
  height: 20px;
  border: 1px solid #b8b8b6;
  background: #ececea;
  color: #a8a69c;
`;

/* ---------- chart panel ---------- */

const ChartPanel = styled.section`
  display: flex;
  flex-direction: column;
  min-width: 0;
  border: 1px solid #c0c0c0;
  background: #fff;
`;

const InfoBar = styled.div`
  display: flex;
  flex: none;
  height: 21px;
  border-bottom: 1px solid #c0c0c0;
  line-height: 20px;
`;

const Quote = styled.span`
  flex: none;
  width: ${(p) => p.$w}px;
  background: ${(p) => p.$bg || "#fff"};
  color: ${(p) => p.$color || "#d01010"};
  font-size: ${(p) => (p.$size || 12)}px;
  font-weight: ${(p) => (p.$bold ? 700 : 400)};
  text-align: center;
  white-space: nowrap;
`;

const InfoActions = styled.div`
  display: flex;
  align-items: center;
  gap: 2px;
  margin-left: auto;
  padding-right: 2px;
`;

const TradeButton = styled.button`
  width: 30px;
  height: 18px;
  border: 1px solid ${(p) => p.$color};
  background: #f6f6f6;
  color: ${(p) => p.$color};
  line-height: 15px;
`;

const GearButton = styled.button`
  ${face}
  width: 20px;
  height: 18px;
  display: flex;
  align-items: center;
  justify-content: center;
`;

const Charts = styled.div`
  display: grid;
  flex: 1;
  min-height: 0;
  grid-template-columns: minmax(0, 1fr) 72px;
  grid-template-rows: minmax(0, 1fr) 43px 112px 17px;
`;

const Plot = styled.div`
  position: relative;
  min-width: 0;
  min-height: 0;
`;

const Legend = styled.ul`
  position: absolute;
  left: 6px;
  top: ${(p) => p.$top}px;
  display: grid;
  grid-template-columns: ${(p) => p.$cols};
  margin: 0;
  padding: 0;
  list-style: none;
  white-space: nowrap;
`;

const LegendItem = styled.li`
  display: flex;
  align-items: center;
  color: ${(p) => p.$color};
  font-size: ${(p) => (p.$small ? 12 : 13)}px;
  font-weight: ${(p) => (p.$bold ? 700 : 400)};
  &::before { content: ""; width: 3px; height: 7px; margin-right: 3px; background: ${(p) => p.$color}; }
`;

const Ohlc = styled.span`
  display: flex;
  justify-content: space-between;
  flex: none;
  width: 354px;
`;

const DateCorner = styled.div`
  border-left: 1px solid #c0c0c0;
  border-top: 1px solid #c0c0c0;
  padding-left: 10px;
  background: #f0f0f0;
  color: #111;
  font-size: 12px;
`;

const ScrollRow = styled.div`
  display: flex;
  flex: none;
  height: 15px;
  border-top: 1px solid #c0c0c0;
  background: #f0f0f0;
`;

const ScrollButton = styled.button`
  width: 17px;
  border: 1px solid #fff;
  border-right-color: #707070;
  border-bottom-color: #707070;
  background: #f0f0f0;
  display: flex;
  align-items: center;
  justify-content: center;
`;

const ScrollTrack = styled.div`
  flex: 1;
  display: flex;
  justify-content: flex-end;
  background: repeating-conic-gradient(#fff 0 25%, #f0f0f0 0 50%) 0 0 / 2px 2px;
`;

const ScrollThumb = styled.div`
  width: 50px;
  border: 1px solid #fff;
  border-right-color: #707070;
  border-bottom-color: #707070;
  background: #f0f0f0;
`;

const MiniButton = styled.button`
  display: flex;
  align-items: center;
  justify-content: center;
  width: 16px;
  height: 14px;
  border: ${(p) => (p.$on ? "1px solid #c0c0c0" : "0")};
  background: none;
  color: #333;
`;

const Zoomer = styled.label`
  display: flex;
  flex-direction: column;
  width: 70px;
  padding: 1px 4px 0 5px;
`;

const Range = styled.input`
  appearance: none;
  width: 61px;
  height: 8px;
  background: linear-gradient(#777, #777) 0 2px / 100% 1px no-repeat;
  &::-webkit-slider-thumb { appearance: none; width: 5px; height: 8px; border: 1px solid #222; border-radius: 0 0 2px 2px; background: #fff; }
`;

const ToolStrip = styled.nav`
  display: flex;
  flex-direction: column;
  align-self: start;
  border: 1px solid #c8c8c8;
  background: #fafafa;
`;

const StripButton = styled.button`
  display: flex;
  align-items: center;
  justify-content: center;
  width: 26px;
  height: 22px;
  border: 0;
  background: none;
  color: #444;
`;

const StripFace = styled.span`
  display: flex;
  align-items: center;
  justify-content: center;
  width: 22px;
  height: 20px;
  border: 1px solid ${(p) => (p.$on ? "#b8b8b8" : "transparent")};
  border-radius: 3px;
  background: ${(p) => (p.$on ? "#eee" : "none")};
`;

const StripRule = styled.hr`
  width: 100%;
  height: 1px;
  margin: 0;
  border: 0;
  background: #c8c8c8;
`;

const TinyBoxes = styled.svg`
  width: 9px;
  height: 18px;
`;

const CHART_TYPES = ["봉차트", "바차트(시고저종)", "바차트(고저종)", "종가선차트", "Mountain 차트", "P&F차트", "삼선전환도", "Swing차트", "Kagi차트", "Renko차트", "역시계곡선", "CandleVolume", "EquiVolume", "FLOW차트", "분산형차트", "계단 차트", "점 차트", "PV차트", "POLE차트", "Heikin-Ashi 차트", "중간선 차트"];

const PRICE_LEGEND = [
  ["가격이평 5", "#5aa000"], ["10", "#5050ff"], ["20", "#1c84d8"], ["60", "#0000b4"], ["120", "#7a1e50"], ["240", "#ff4646"], ["33", "#993333"],
  ["BB_상한선(20,2,c)", "#ff6a20"], ["BB_중심선", "#009c4a"], ["BB_하한선", "#306cff"],
];

const STRIP = ["circle", "bars", "plusPen", "minusPen", "barPen", "slash", "auto", "text", "all", "candles", "lensInfo", "lensLines", "linesLens", "arrows", "zigzag", "fourA", "fourB", "undo", "redo", "lens"];
const MINI = ["zoomOut", "zoomIn", "letterA", "gear", "brush", "sheet", "panel", "chartFrame", "cross", "stack", "expand"];

const CornerMark = ({ gap }) => <Corner $gap={gap} viewBox="0 0 4 4"><path d="M4 0v4H0z" fill="#a0a0a0" /></Corner>;

function TopToolbar() {
  const [period, setPeriod] = useState("일");
  return (
    <Toolbar>
      <Group $gap={1}><ToolButton aria-label="이전"><Icon name="doubleLeft" /></ToolButton></Group>
      <Group $gap={2}><ToolButton aria-label="펼치기"><Icon name="doubleDown" /></ToolButton></Group>
      <Group $gap={1}><ToolButton $strong>전</ToolButton></Group>
      <Group $gap={2}><ToolButton $strong $w={34}>주식<CornerMark /></ToolButton></Group>
      <Group $gap={2}>
        <Field $w={45} $open aria-label="종목코드" defaultValue="007660" />
        <ToolButton $joined aria-label="목록"><Icon name="chevron" /></ToolButton>
        <ToolButton $joined $w={18} aria-label="종목검색"><Icon name="lensLeft" /></ToolButton>
      </Group>
      <Group $gap={2}><ToolButton>관</ToolButton></Group>
      <Group $gap={2}>
        <ToolButton>숭</ToolButton>
        <Spin w={20} />
        <ToolButton $w={10} aria-label="더보기"><svg width="3" height="12"><path d="M0 0h2v2H0zM0 5h2v2H0zM0 10h2v2H0z" fill="#444" /></svg></ToolButton>
      </Group>
      <Group $gap={1}><Stock><NewMark>신</NewMark>이수페타시스<CornerMark gap={8} /></Stock></Group>
      <Group $gap={3}><ToolButton $strong $bold>i</ToolButton></Group>
      <Group $gap={1}>
        {["일", "주", "월", "분", "틱", "년"].map((t) => (
          <ToolButton key={t} $joined $strong $w={t === "일" ? 20 : 19} $on={period === t} aria-pressed={period === t} onClick={() => setPeriod(t)}>{t}</ToolButton>
        ))}
      </Group>
      <Group $gap={2}>
        {["1", "3", "5", "10", "30", "60"].map((t, i) => <ToolButton key={t} $joined $strong $w={i ? 19 : 20}>{t}</ToolButton>)}
      </Group>
      <Group $gap={1}>
        <CountSelect aria-label="주기" defaultValue="1"><option>1</option><option>2</option></CountSelect>
        <SelectMark><Icon name="chevron" /></SelectMark>
      </Group>
      <Group $gap={2}>
        <Field $w={66} $open aria-label="날짜" defaultValue="2024/12/03" />
        <ToolButton aria-label="달력"><Icon name="calendar" /></ToolButton>
      </Group>
      <Group $gap={2}><ToolButton $dim>당</ToolButton></Group>
      <Group><Field $w={45} $open $align="right" aria-label="표시 개수" defaultValue="170" /><Spin w={15} /></Group>
      <Slash>/</Slash>
      <Group $gap={2}><Field $w={44} $align="right" aria-label="전체 개수" defaultValue="3000" /></Group>
      <Group $gap={1}><ToolButton aria-label="확대"><Icon name="lensPlus" /></ToolButton></Group>
      <Group><ToolButton aria-label="설정"><Icon name="gear" /></ToolButton></Group>
      <More aria-label="더보기"><Icon name="doubleRight" size={14} /></More>
    </Toolbar>
  );
}

function SidePanel() {
  const [type, setType] = useState("봉차트");
  return (
    <Sidebar>
      <Tabs><Tab>종목</Tab><Tab $on>지표</Tab><Tab>전략</Tab></Tabs>
      <SearchRow>
        <SearchInput placeholder="스마트 검색" aria-label="스마트 검색" />
        <Group $gap={2}><ToolButton aria-label="검색"><Icon name="lens" /></ToolButton></Group>
        <ToolButton aria-label="펼치기"><Icon name="doubleDown" /></ToolButton>
      </SearchRow>
      <Tree>
        <Section>
          <Drawing viewBox="0 0 18 18"><path fill="#333" stroke="none" d="M4 4h5v2h6v9H4z" /><path stroke="#fff" d="M7 10.500h5" /></Drawing>유형
        </Section>
        <Options>
          <OptionsTitle><svg width="6" height="6"><path d="M.5 0v4.500H5" fill="none" stroke="#444" /></svg>차트유형</OptionsTitle>
          {CHART_TYPES.map((name) => (
            <Option key={name}>
              <Radio type="radio" name="chart-type" checked={type === name} onChange={() => setType(name)} />
              <OptionText $on={type === name}>{name}</OptionText>
            </Option>
          ))}
        </Options>
        {["지표", "신호검색", "강세약세", "투자자동향", "관심지표"].map((name) => (
          <Section key={name}><Icon name="folder" />{name}</Section>
        ))}
      </Tree>
      <SideFooter>
        <FooterLabel>관심지표</FooterLabel>
        <FooterButton>등록</FooterButton>
        <FooterButton>삭제</FooterButton>
      </SideFooter>
    </Sidebar>
  );
}

function Quotes() {
  return (
    <InfoBar>
      <Quote $w={76} $bg="#f2d8d8" $bold $size={13}>26,750</Quote>
      <Quote $w={68} $bg="#f2d8d8" $bold $size={13}>▲5,650</Quote>
      <Quote $w={54} $bg="#f2d8d8" $bold>+26.78%</Quote>
      <Quote $w={108} $bg="#f2d8d8" $color="#111">23,578,097</Quote>
      <Quote $w={22} $bg="#ececec" $color="#111" $size={13}>시</Quote><Quote $w={71}>23,100</Quote>
      <Quote $w={22} $bg="#ececec" $color="#111" $size={13}>고</Quote><Quote $w={71}>27,100</Quote>
      <Quote $w={22} $bg="#ececec" $color="#111" $size={13}>저</Quote><Quote $w={71}>22,500</Quote>
      <Quote $w={58} $bg="#ececec" $color="#111" $size={13}>체결강도</Quote><Quote $w={51}>103.46</Quote>
      <InfoActions>
        <Quote $w={24} $color="#333" $size={13}>[일]</Quote>
        <GearButton aria-label="설정"><Icon name="gear" size={16} /></GearButton>
        <TradeButton $color="#c83030">매수</TradeButton>
        <TradeButton $color="#2040c0">매도</TradeButton>
        <TinyBoxes viewBox="0 0 9 18"><path d="M.5.500h8v8h-8zM.500 9.500h8v8h-8z" fill="#f4f4f4" stroke="#b0b0b0" /><path d="M2.500 2.500h4v4h-4zM2.500 11.500l4 4m0-4l-4 4" fill="none" stroke="#333" /></TinyBoxes>
      </InfoActions>
    </InfoBar>
  );
}

export default function App() {
  return (
    <>
      <Global />
      <Window>
        <TitleBar>
          <Badge $color="#c06a10">1</Badge><Badge $color="#707070">?</Badge>
          <Title>[9590] 종합차트</Title>
          {[["popOut", 0, "분리"], ["checkWins", 0, "선택"], ["camera", 0, "캡처"], ["gearThin", 0, "설정"], ["minimize", 4, "최소화"], ["maximize", 0, "최대화"], ["close", 0, "닫기"]].map(([n, gap, label]) => (
            <TitleButton key={n} $gap={gap} aria-label={label}><Icon name={n} /></TitleButton>
          ))}
        </TitleBar>
        <TopToolbar />
        <Body>
          <SidePanel />
          <ChartPanel>
            <Quotes />
            <Charts>
              <Plot>
                <PriceChart />
                <Legend $top={1} $cols="60px 366px 72px 24px 25px 24px 29px 30px 24px 114px 66px 66px">
                  <LegendItem $color="#111">대기매물</LegendItem>
                  <LegendItem $color="#000" $bold>
                    <Ohlc><span>이수페타시스</span><span>시:23,100</span><span>고:27,100</span><span>저:22,500</span><span>종:26,750</span></Ohlc>
                  </LegendItem>
                  {PRICE_LEGEND.map(([label, color]) => <LegendItem key={label} $color={color} $small>{label}</LegendItem>)}
                </Legend>
              </Plot>
              <PriceAxis />
              <Plot>
                <VolumeChart />
                <Legend $top={2} $cols="48px 72px 24px 24px 30px">
                  <LegendItem $color="#111">거래량</LegendItem>
                  <LegendItem $color="#5aa000" $small>거래이평 5</LegendItem>
                  <LegendItem $color="#1c84d8" $small>20</LegendItem>
                  <LegendItem $color="#0000b4" $small>60</LegendItem>
                  <LegendItem $color="#7a1e50" $small>120</LegendItem>
                </Legend>
              </Plot>
              <SubAxis pane={VOLUME} labels={[["20,000K", 594]]} />
              <Plot>
                <RsiChart />
                <Legend $top={2} $cols="66px 50px">
                  <LegendItem $color="#ff6a20">RSI(14,6)</LegendItem>
                  <LegendItem $color="#306cff" $small>Signal</LegendItem>
                </Legend>
              </Plot>
              <SubAxis pane={STRENGTH} labels={[["75.00", 644], ["50.00", 676], ["25.00", 707]]} />
              <DateAxis />
              <DateCorner>12/08</DateCorner>
            </Charts>
            <ScrollRow>
              <ScrollButton aria-label="왼쪽으로"><svg width="4" height="6"><path d="M4 0v6L0 3z" /></svg></ScrollButton>
              <ScrollTrack><ScrollThumb /></ScrollTrack>
              <ScrollButton aria-label="오른쪽으로"><svg width="4" height="6"><path d="M0 0v6l4-3z" /></svg></ScrollButton>
              {["first", "pause", "last"].map((n) => <MiniButton key={n} aria-label={n}><Icon name={n} size={16} /></MiniButton>)}
              <Zoomer aria-label="확대 비율">
                <Range type="range" min="0" max="100" defaultValue="6" aria-label="확대 비율" />
                <svg width="61" height="5"><path stroke="#222" d={Array.from({ length: 21 }, (_, i) => `M${i * 3 + 0.5} ${i % 5 ? 2 : 0}V5`).join("")} /></svg>
              </Zoomer>
              {MINI.map((n) => <MiniButton key={n} $on={n === "panel" || n === "cross"} aria-label={n}><Icon name={n} size={n === "panel" || n === "cross" ? 14 : 16} /></MiniButton>)}
            </ScrollRow>
          </ChartPanel>
          <ToolStrip>
            {["loop", "gear"].map((n) => <StripButton key={n} aria-label={n}><StripFace><Icon name={n} /></StripFace></StripButton>)}
            <StripRule />
            {STRIP.map((n) => <StripButton key={n} aria-label={n}><StripFace $on={n === "lensInfo"}><Icon name={n} /></StripFace></StripButton>)}
          </ToolStrip>
        </Body>
      </Window>
    </>
  );
}
